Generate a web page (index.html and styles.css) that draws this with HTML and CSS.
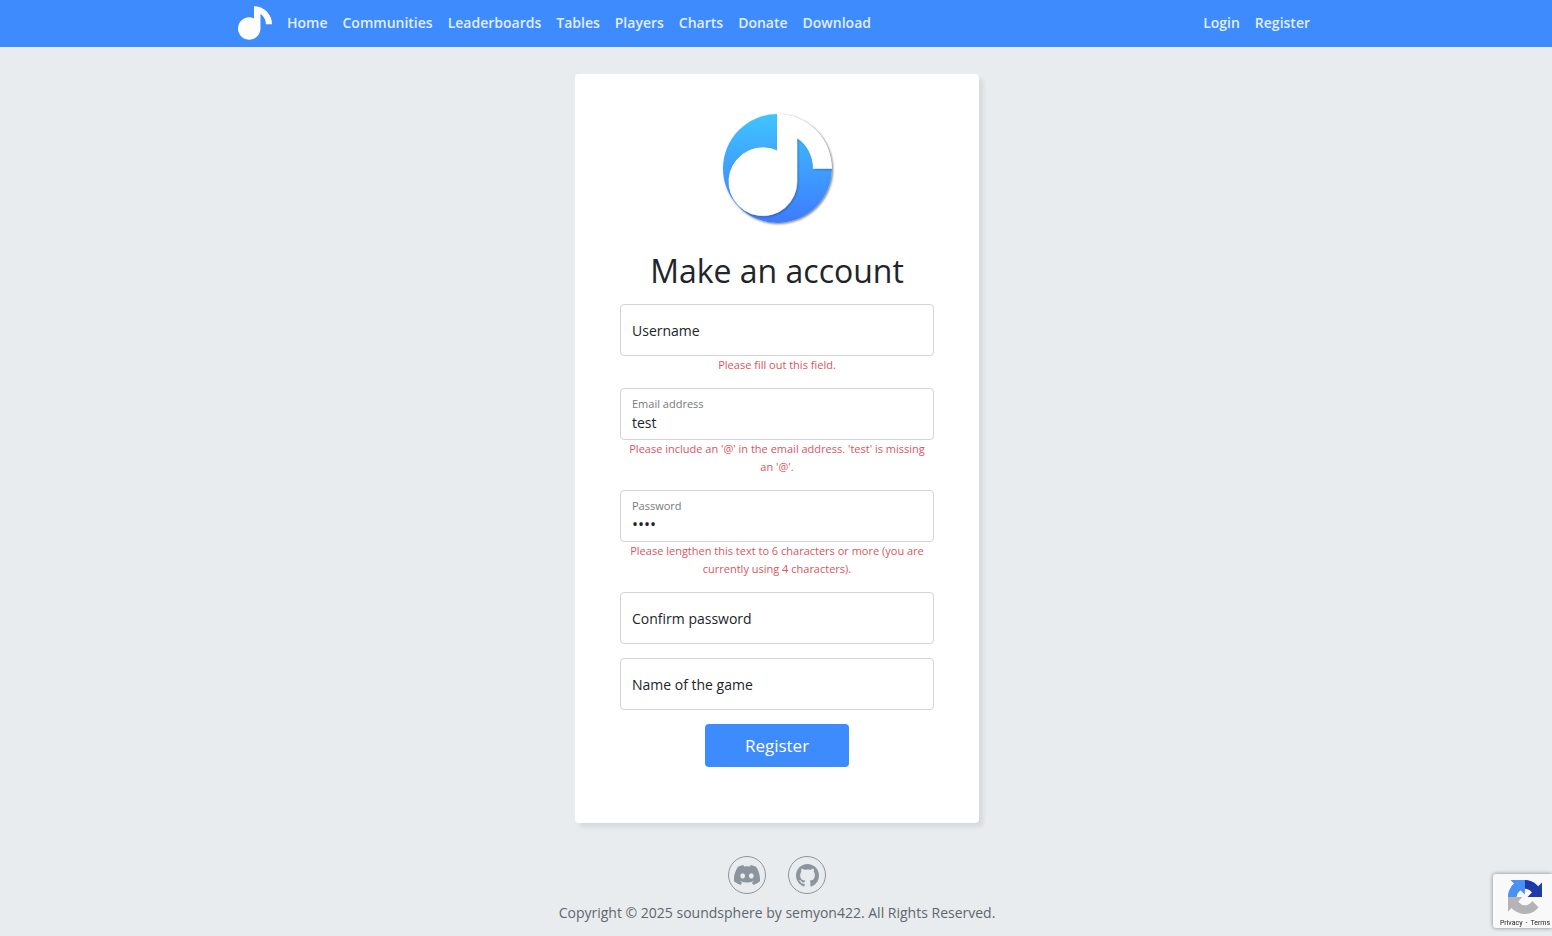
FILE: index.html
```html
<!DOCTYPE html>
<html lang="en">
<head>
<meta charset="utf-8">
<meta name="viewport" content="width=device-width, initial-scale=1">
<title>Register - soundsphere</title>
<link rel="stylesheet" href="styles.css">
</head>
<body>
<header class="navbar">
  <nav class="navbar-inner" aria-label="Main">
    <a class="brand" href="#" aria-label="soundsphere">
      <svg class="brand-icon" viewBox="0 0 103 102" aria-hidden="true">
        <path id="note" d="M48.500 0A54.500 54.500 0 0 1 103 54.500H84.500C84.500 42 78 30 68 24V68A34 34 0 1 1 48.500 37Z"/>
      </svg>
    </a>
    <a class="nav-link" href="#">Home</a>
    <a class="nav-link" href="#">Communities</a>
    <a class="nav-link" href="#">Leaderboards</a>
    <a class="nav-link" href="#">Tables</a>
    <a class="nav-link" href="#">Players</a>
    <a class="nav-link" href="#">Charts</a>
    <a class="nav-link" href="#">Donate</a>
    <a class="nav-link" href="#">Download</a>
    <div class="nav-account">
      <a class="nav-link" href="#">Login</a>
      <a class="nav-link" href="#">Register</a>
    </div>
  </nav>
</header>

<div class="page">
<main class="card">
  <svg class="logo" viewBox="0 0 116 116" aria-hidden="true">
    <defs>
      <linearGradient id="sky" x1="0" y1="0" x2="0" y2="1">
        <stop offset="0" stop-color="#40c4ff"/>
        <stop offset="1" stop-color="#3d7bff"/>
      </linearGradient>
      <clipPath id="disc"><circle cx="58.500" cy="57.500" r="54.500"/></clipPath>
      <mask id="cutout">
        <rect width="116" height="116" fill="#fff"/>
        <use href="#note" x="10" y="3" fill="#000" stroke="#000"/>
      </mask>
    </defs>
    <circle class="logo-disc" cx="58.500" cy="57.500" r="54.500" fill="#fff"/>
    <circle cx="58.500" cy="57.500" r="54.500" fill="url(#sky)" mask="url(#cutout)"/>
    <g clip-path="url(#disc)">
      <use class="logo-note" href="#note" x="10" y="3" fill="#fff"/>
    </g>
  </svg>
  <h1 class="title">Make an account</h1>
  <form class="form" novalidate>
    <div class="field">
      <div class="control">
        <input class="input" id="username" type="text" placeholder=" " required>
        <label class="label" for="username">Username</label>
      </div>
      <p class="error">Please fill out this field.</p>
    </div>
    <div class="field">
      <div class="control">
        <input class="input" id="email" type="email" placeholder=" " value="test">
        <label class="label" for="email">Email address</label>
      </div>
      <p class="error">Please include an '@' in the email address. 'test' is missing an '@'.</p>
    </div>
    <div class="field">
      <div class="control">
        <input class="input" id="password" type="password" placeholder=" " value="test">
        <label class="label" for="password">Password</label>
      </div>
      <p class="error">Please lengthen this text to 6 characters or more (you are currently using 4 characters).</p>
    </div>
    <div class="field">
      <div class="control">
        <input class="input" id="confirm" type="password" placeholder=" ">
        <label class="label" for="confirm">Confirm password</label>
      </div>
    </div>
    <div class="field">
      <div class="control">
        <input class="input" id="game" type="text" placeholder=" ">
        <label class="label" for="game">Name of the game</label>
      </div>
    </div>
    <button class="submit" type="submit">Register</button>
  </form>
</main>

<footer class="footer">
  <div class="social">
    <a class="social-link" href="#" aria-label="Discord">
      <svg class="icon-discord" viewBox="0 0 16 16" aria-hidden="true"><path fill="currentColor" d="M13.545 2.907a13.2 13.2 0 0 0-3.257-1.011.05.05 0 0 0-.052.025c-.141.25-.297.577-.406.833a12.200 12.200 0 0 0-3.658 0 8 8 0 0 0-.412-.833.05.05 0 0 0-.052-.025c-1.125.194-2.220.534-3.257 1.011a.04.04 0 0 0-.021.018C.356 6.024-.213 9.047.066 12.032q.003.022.021.037a13.300 13.300 0 0 0 3.995 2.020.05.05 0 0 0 .056-.019q.463-.63.818-1.329a.05.05 0 0 0-.010-.059l-.018-.011a9 9 0 0 1-1.248-.595.05.05 0 0 1-.020-.066l.015-.019q.127-.095.248-.195a.05.05 0 0 1 .051-.007c2.619 1.196 5.454 1.196 8.041 0a.05.05 0 0 1 .053.007q.121.1.248.195a.05.05 0 0 1-.004.085 8 8 0 0 1-1.249.594.05.05 0 0 0-.030.030.05.05 0 0 0 .003.041c.24.465.515.909.817 1.329a.05.05 0 0 0 .056.019 13.200 13.200 0 0 0 4.001-2.020.05.05 0 0 0 .021-.037c.334-3.451-.559-6.449-2.366-9.106a.03.03 0 0 0-.020-.019m-8.198 7.307c-.789 0-1.438-.724-1.438-1.612s.637-1.613 1.438-1.613c.807 0 1.450.73 1.438 1.613 0 .888-.637 1.612-1.438 1.612m5.316 0c-.788 0-1.438-.724-1.438-1.612s.637-1.613 1.438-1.613c.807 0 1.451.73 1.438 1.613 0 .888-.631 1.612-1.438 1.612"/></svg>
    </a>
    <a class="social-link" href="#" aria-label="GitHub">
      <svg class="icon-github" viewBox="0 0 16 16" aria-hidden="true"><path fill="currentColor" d="M8 0C3.580 0 0 3.580 0 8c0 3.540 2.290 6.530 5.470 7.590.4.070.55-.17.55-.38 0-.19-.010-.82-.010-1.490-2.010.37-2.530-.49-2.690-.94-.090-.23-.48-.94-.82-1.130-.28-.15-.68-.52-.010-.53.63-.010 1.080.58 1.230.82.72 1.210 1.870.87 2.330.66.070-.52.28-.87.51-1.070-1.780-.2-3.640-.89-3.640-3.950 0-.87.31-1.590.82-2.150-.080-.2-.36-1.020.080-2.120 0 0 .67-.21 2.200.82.64-.18 1.320-.27 2-.27s1.360.090 2 .27c1.530-1.040 2.200-.82 2.200-.82.44 1.100.16 1.920.080 2.120.51.56.82 1.270.82 2.150 0 3.070-1.870 3.750-3.650 3.950.29.25.54.73.54 1.480 0 1.070-.010 1.930-.010 2.200 0 .21.15.46.55.38A8.010 8.010 0 0 0 16 8c0-4.420-3.580-8-8-8"/></svg>
    </a>
  </div>
  <p class="copyright">Copyright © 2025 soundsphere by semyon422. All Rights Reserved.</p>
</footer>
</div>

<aside class="badge" aria-label="reCAPTCHA">
  <svg class="badge-icon" viewBox="0 0 64 64" aria-hidden="true">
    <path fill="#1c3aa9" d="M64 31.955l-.033-1.370V4.687l-7.160 7.160C50.948 4.674 42.033.093 32.050.093c-10.400 0-19.622 4.960-25.458 12.640l11.736 11.860a15.550 15.550 0 0 1 4.754-5.334c2.050-1.600 4.952-2.906 8.968-2.906.485 0 .86.057 1.135.163 4.976.393 9.288 3.140 11.828 7.124l-8.307 8.307L64 31.953"/>
    <path fill="#4a90f5" d="M31.862.094l-1.370.033H4.594l7.160 7.160C4.580 13.147 0 22.060 0 32.046c0 10.400 4.960 19.622 12.640 25.458L24.500 45.768a15.550 15.550 0 0 1-5.334-4.754c-1.600-2.050-2.906-4.952-2.906-8.968 0-.485.057-.86.163-1.135.393-4.976 3.140-9.288 7.124-11.828l8.307 8.307L31.860.095"/>
    <path fill="#b4b4b4" d="M.001 32.045l.033 1.370v25.898l7.160-7.160c5.860 7.173 14.774 11.754 24.760 11.754 10.400 0 19.622-4.960 25.458-12.640l-11.736-11.860a15.550 15.550 0 0 1-4.754 5.334c-2.050 1.600-4.952 2.906-8.968 2.906-.485 0-.86-.057-1.135-.163-4.976-.393-9.288-3.140-11.828-7.124l8.307-8.307c-10.522.040-22.400.066-27.295-.005"/>
  </svg>
  <div class="badge-links"><a href="#">Privacy</a><span>-</span><a href="#">Terms</a></div>
</aside>
</body>
</html>
```
FILE: styles.css
```css
*, *::before, *::after { box-sizing: border-box; }

body {
  margin: 0;
  background: #e8ecef;
  color: #212529;
  font-family: "Open Sans", "Noto Sans", sans-serif;
  font-size: 14px;
  line-height: 22px;
}

a { color: inherit; text-decoration: none; }

.navbar { background: #3d8bfd; }

.navbar-inner {
  display: flex;
  align-items: center;
  gap: 15px;
  max-width: 1080px;
  min-height: 47px;
  margin: 0 auto;
  padding: 0 6px 2px 2px;
}

.brand { display: flex; }
.brand-icon { width: 34px; height: 34px; fill: #fff; }

.nav-link { color: #e2eeff; font-weight: 600; }
.nav-account { display: flex; gap: 15px; margin-left: auto; }

.page { padding-left: 2px; }

.card {
  display: flex;
  flex-direction: column;
  align-items: center;
  max-width: 404px;
  margin: 27px auto 0;
  padding: 37px 45px 56px;
  background: #fff;
  border-radius: 4px;
  box-shadow: 4px 4px 4px rgba(0, 0, 0, 0.08);
}

.logo { width: 116px; height: 116px; overflow: visible; }
.logo-disc { filter: drop-shadow(1px 1px 1px rgba(0, 0, 0, 0.5)); }
.logo-note { filter: drop-shadow(1px 1px 1px rgba(0, 0, 0, 0.3)); }

.title {
  margin: 22px 0 12px;
  font-size: 32px;
  font-weight: 400;
  line-height: 43px;
}

.form {
  display: flex;
  flex-direction: column;
  align-items: center;
  gap: 14px;
  width: 100%;
}

.field { width: 100%; }
.control { position: relative; }

.input {
  display: block;
  width: 100%;
  height: 52px;
  padding: 18px 11px 2px;
  border: 1px solid #ced4da;
  border-radius: 4px;
  background: #fff;
  color: #212529;
  font: inherit;
  outline: 0;
}

.input[type="password"] { font-size: 16px; }

.label {
  position: absolute;
  top: 16px;
  left: 12px;
  pointer-events: none;
}

.input:not(:placeholder-shown) + .label {
  top: 5px;
  color: #777a7d;
  font-size: 11px;
}

.error {
  margin: 0;
  padding: 0 4px;
  color: #dc5460;
  font-size: 11px;
  line-height: 18px;
  text-align: center;
}

.submit {
  min-width: 144px;
  height: 43px;
  border: 0;
  border-radius: 4px;
  background: #3d8bfd;
  color: #fff;
  font: inherit;
  font-size: 17px;
}

.footer { padding: 33px 0 8px; text-align: center; color: #5f666d; }

.social {
  display: flex;
  justify-content: center;
  gap: 22px;
  color: #8c959d;
}

.social-link {
  display: flex;
  align-items: center;
  justify-content: center;
  width: 38px;
  height: 38px;
  border: 1px solid #8c959d;
  border-radius: 50%;
}

.icon-discord { width: 26px; height: 26px; }
.icon-github { width: 23px; height: 23px; }

.copyright { margin: 8px 0 0; }

.badge {
  position: fixed;
  right: 0;
  bottom: 8px;
  display: flex;
  flex-direction: column;
  align-items: center;
  width: 59px;
  height: 54px;
  padding: 6px 0 0 5px;
  border-radius: 3px 0 0 3px;
  background: #f9f9f9;
  box-shadow: 0 0 4px #808080;
}

.badge-icon { flex-shrink: 0; width: 34px; height: 34px; }

.badge-links {
  display: flex;
  gap: 3px;
  padding-top: 4px;
  font-family: Roboto, sans-serif;
  font-size: 7px;
  line-height: 10px;
}
```
